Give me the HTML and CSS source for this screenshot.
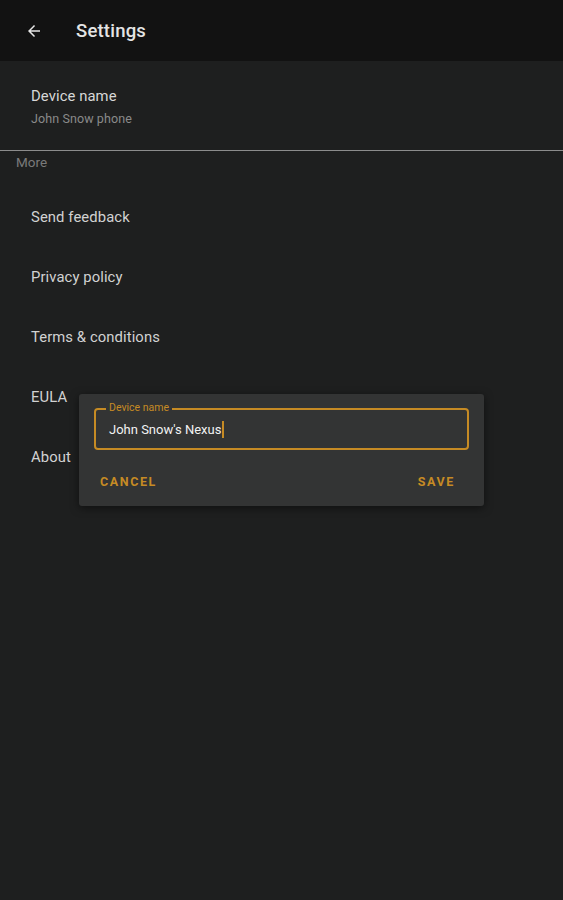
FILE: index.html
```html
<!DOCTYPE html>
<html>
<head>
<meta charset="utf-8">
<link rel="stylesheet" href="styles.css">
</head>
<body>
<div class="app">
  <header class="topbar">
    <svg class="back" width="18" height="18" viewBox="0 0 24 24"><path d="M20 11H7.83l5.59-5.59L12 4l-8 8 8 8 1.41-1.41L7.83 13H20v-2z" fill="#e6e6e6"/></svg>
    <h1 class="title">Settings</h1>
  </header>
  <main class="content">
    <div class="pref pref-two">
      <div class="pref-title">Device name</div>
      <div class="pref-sub">John Snow phone</div>
    </div>
    <div class="divider"></div>
    <div class="category">More</div>
    <div class="pref">Send feedback</div>
    <div class="pref">Privacy policy</div>
    <div class="pref">Terms &amp; conditions</div>
    <div class="pref">EULA</div>
    <div class="pref">About</div>

    <div class="dialog">
      <div class="field">
        <span class="field-label">Device name</span>
        <span class="field-value">John Snow's Nexus</span><span class="caret"></span>
      </div>
      <div class="actions">
        <span class="btn">CANCEL</span>
        <span class="btn">SAVE</span>
      </div>
    </div>
  </main>
</div>
</body>
</html>
```
FILE: styles.css
```css
* { box-sizing: border-box; }
html, body { margin: 0; padding: 0; }
body {
  width: 563px;
  height: 900px;
  background: #1e1f1f;
  font-family: Roboto, "Liberation Sans", sans-serif;
  overflow: hidden;
}
.app { height: 900px; display: flex; flex-direction: column; }
.topbar {
  height: 61px;
  background: #121212;
  display: flex;
  align-items: center;
  padding-left: 25px;
  padding-top: 1px;
  flex-shrink: 0;
}
.back { display: block; }
.title {
  margin: 0 0 0 33px;
  font-size: 18.5px;
  font-weight: 500;
  color: #e4e4e4;
  letter-spacing: 0.2px;
}
.content { position: relative; flex: 1; }
.pref {
  height: 60px;
  display: flex;
  align-items: center;
  padding-left: 31px;
  padding-top: 2px;
  font-size: 14.8px;
  color: #d2d2d2;
  letter-spacing: 0.1px;
}
.pref-two {
  height: 89px;
  flex-direction: column;
  align-items: flex-start;
  justify-content: center;
  padding-top: 2px;
  padding-bottom: 0;
}
.pref-title { font-size: 14.8px; color: #d8d8d8; }
.pref-sub { font-size: 12.5px; color: #8a8a8a; margin-top: 6px; letter-spacing: 0.1px; }
.divider { height: 1px; background: #8c8c8c; }
.category {
  padding-left: 16px;
  font-size: 13.5px;
  color: #7a7a7a;
  height: 35px;
  padding-top: 3px;
}
.dialog {
  position: absolute;
  left: 79px;
  top: 333px;
  width: 405px;
  height: 112px;
  background: #333434;
  border-radius: 3px;
  padding: 14px 15px 0 15px;
  box-shadow: 0 2px 8px rgba(0,0,0,0.5);
}
.field {
  position: relative;
  height: 42px;
  border: 2px solid #c68b24;
  border-radius: 4px;
  padding-left: 13px;
  display: flex;
  align-items: center;
}
.field-label {
  position: absolute;
  left: 10px;
  top: -8px;
  padding: 0 3px;
  background: #333434;
  font-size: 10.5px;
  color: #c68b24;
  line-height: 12px;
}
.field-value { font-size: 13px; color: #f2f2f2; letter-spacing: 0; }
.caret {
  display: inline-block;
  width: 2px;
  height: 17px;
  background: #c68b24;
  margin-left: 1px;
}
.actions {
  display: flex;
  justify-content: space-between;
  padding: 0 14px 0 6px;
  margin-top: 24px;
}
.btn {
  font-size: 12.5px;
  font-weight: 700;
  color: #c68b24;
  letter-spacing: 1.6px;
}
```
